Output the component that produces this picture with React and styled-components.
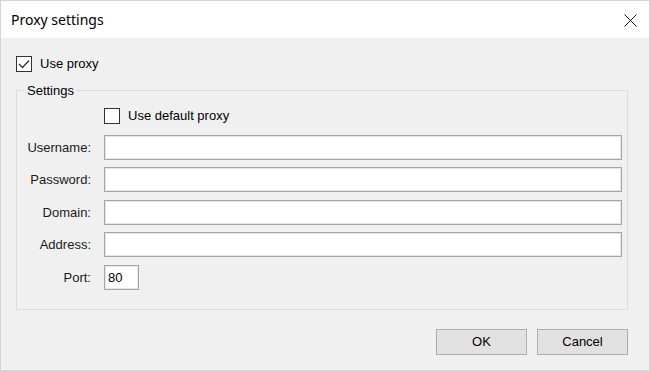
import React from "react";
import styled, { createGlobalStyle } from "styled-components";

const Global = createGlobalStyle`
  html, body { margin: 0; padding: 0; background: #f0f0f0; }
  * { box-sizing: border-box; }
`;

const Window = styled.div`
  width: 651px;
  height: 372px;
  display: flex;
  flex-direction: column;
  background: #f0f0f0;
  border-style: solid;
  border-color: #d4d4d4;
  border-width: 1px 2px 2px 1px;
  font-family: "Liberation Sans", Arial, sans-serif;
  font-size: 13px;
  color: #000;
`;

const TitleBar = styled.div`
  height: 37px;
  flex: none;
  background: #fff;
  display: flex;
  align-items: center;
  justify-content: space-between;
  padding: 0 12px 0 10px;
`;

const Title = styled.div`
  font-family: "Segoe UI", "Noto Sans", sans-serif;
  font-size: 14px;
  padding-bottom: 1px;
`;

const CloseButton = styled.div`
  width: 14px;
  height: 14px;
  display: flex;
  align-items: center;
  justify-content: center;
  margin-top: 1px;
`;

const Body = styled.div`
  flex: 1;
  display: flex;
  flex-direction: column;
  padding: 18px 21px 0 15px;
`;

const CheckRow = styled.label`
  display: flex;
  align-items: center;
  gap: 8px;
  height: 16px;
  line-height: 16px;
`;

const Box = styled.span`
  width: 16px;
  height: 16px;
  flex: none;
  border: 1px solid #333;
  background: #fff;
  display: flex;
  align-items: center;
  justify-content: center;
`;

const Group = styled.fieldset`
  margin: 10px 0 0 0;
  padding: 10px 5px 19px 8px;
  border: 1px solid #dcdcdc;
  min-width: 0;
`;

const Legend = styled.legend`
  padding: 0 2px;
  line-height: 16px;
  transform: translateY(1px);
`;

const Grid = styled.div`
  display: grid;
  grid-template-columns: 64px 1fr;
  column-gap: 13px;
  row-gap: 7.5px;
  padding-left: 2px;
  align-items: center;
`;

const DefaultRow = styled(CheckRow)`
  grid-column: 2;
  margin-bottom: 3px;
  gap: 8px;
`;

const Label = styled.div`
  text-align: right;
  white-space: nowrap;
  color: #1a1a1a;
`;

const Input = styled.div`
  height: 25px;
  width: ${(p) => (p.$w ? `${p.$w}px` : "100%")};
  background: #fff;
  border: 1px solid #a6a6a6;
  box-shadow: inset 0 0 0 1px #e6e6e6;
  padding-left: 3px;
  display: flex;
  align-items: center;
  font-size: 13px;
`;

const Buttons = styled.div`
  display: flex;
  justify-content: flex-end;
  gap: 10px;
  margin-top: 19px;
`;

const Button = styled.div`
  width: 91px;
  height: 26px;
  background: #e1e1e1;
  border: 1px solid #adadad;
  display: flex;
  align-items: center;
  justify-content: center;
  padding-bottom: 1px;
`;

const Check = ({ checked }) => (
  <Box>
    {checked && (
      <svg width="12" height="10" viewBox="0 0 12 10">
        <path d="M1 5 L4.5 8.5 L11 1.5" fill="none" stroke="#333" strokeWidth="1.3" />
      </svg>
    )}
  </Box>
);

const fields = [
  { label: "Username:" },
  { label: "Password:" },
  { label: "Domain:" },
  { label: "Address:" },
  { label: "Port:", value: "80", w: 35 },
];

export default function App() {
  return (
    <>
      <Global />
      <Window>
        <TitleBar>
          <Title>Proxy settings</Title>
          <CloseButton>
            <svg width="13" height="13" viewBox="0 0 13 13">
              <path d="M0.5 0.5 L12.5 12.5 M12.5 0.5 L0.5 12.5" stroke="#111" strokeWidth="1" />
            </svg>
          </CloseButton>
        </TitleBar>
        <Body>
          <CheckRow>
            <Check checked />
            <span>Use proxy</span>
          </CheckRow>
          <Group>
            <Legend>Settings</Legend>
            <Grid>
              <DefaultRow>
                <Check />
                <span>Use default proxy</span>
              </DefaultRow>
              {fields.map((f) => (
                <React.Fragment key={f.label}>
                  <Label>{f.label}</Label>
                  <Input $w={f.w}>{f.value}</Input>
                </React.Fragment>
              ))}
            </Grid>
          </Group>
          <Buttons>
            <Button>OK</Button>
            <Button>Cancel</Button>
          </Buttons>
        </Body>
      </Window>
    </>
  );
}
